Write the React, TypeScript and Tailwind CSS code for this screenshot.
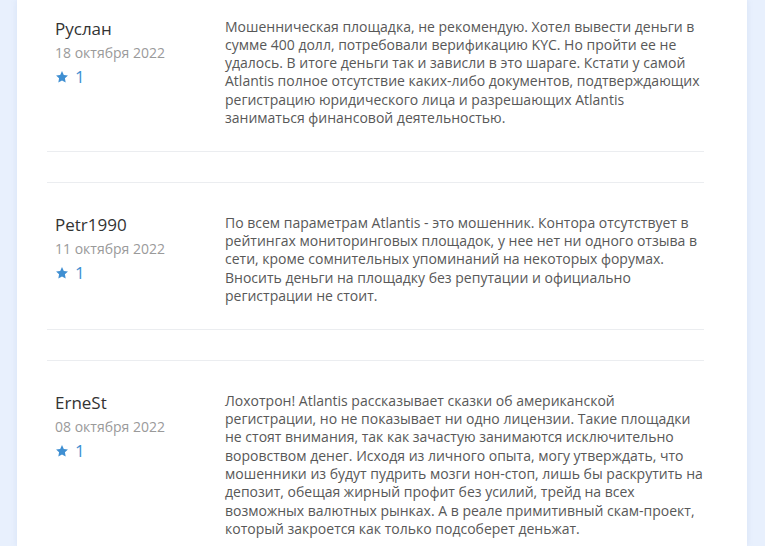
const reviews = [
  {
    name: "Руслан",
    date: "18 октября 2022",
    rating: 1,
    text: "Мошенническая площадка, не рекомендую. Хотел вывести деньги в сумме 400 долл, потребовали верификацию KYC. Но пройти ее не удалось. В итоге деньги так и зависли в это шараге. Кстати у самой Atlantis полное отсутствие каких-либо документов, подтверждающих регистрацию юридического лица и разрешающих Atlantis заниматься финансовой деятельностью.",
  },
  {
    name: "Petr1990",
    date: "11 октября 2022",
    rating: 1,
    text: "По всем параметрам Atlantis - это мошенник. Контора отсутствует в рейтингах мониторинговых площадок, у нее нет ни одного отзыва в сети, кроме сомнительных упоминаний на некоторых форумах. Вносить деньги на площадку без репутации и официально регистрации не стоит.",
  },
  {
    name: "ErneSt",
    date: "08 октября 2022",
    rating: 1,
    text: "Лохотрон! Atlantis рассказывает сказки об американской регистрации, но не показывает ни одно лицензии. Такие площадки не стоят внимания, так как зачастую занимаются исключительно воровством денег. Исходя из личного опыта, могу утверждать, что мошенники из будут пудрить мозги нон-стоп, лишь бы раскрутить на депозит, обещая жирный профит без усилий, трейд на всех возможных валютных рынках. А в реале примитивный скам-проект, который закроется как только подсоберет деньжат.",
  },
];

function Star() {
  return (
    <svg viewBox="0 0 24 24" className="h-[14px] w-[14px]" fill="#3f8fd2">
      <path d="M12 1.8l3.1 6.6 7.1.9-5.2 4.9 1.3 7.1L12 17.8l-6.3 3.5 1.3-7.1L1.8 9.3l7.1-.9z" />
    </svg>
  );
}

function Review({ r }: { r: (typeof reviews)[number] }) {
  return (
    <div className="mb-[30px] flex border-y border-[#ebedf0] pt-[28.5px] pb-[24px]">
      <div className="w-[178px] shrink-0 pl-[8px]">
        <div className="text-[17px] leading-[26px] text-[#333]">{r.name}</div>
        <div className="mt-[1px] text-[14px] leading-[19px] text-[#9a9a9a]">{r.date}</div>
        <div className="mt-[3px] flex items-center gap-[6px] text-[17px] leading-[24px] text-[#3f8fd2]">
          <Star />
          <span>{r.rating}</span>
        </div>
      </div>
      <p className="mt-[2px] w-[480px] shrink-0 text-[14px] leading-[18.3px] text-[#585858]">{r.text}</p>
    </div>
  );
}

export default function App() {
  return (
    <div
      className="h-[546px] overflow-hidden bg-[#e8f0fd] pl-[17px] pr-[18px]"
      style={{ fontFamily: '"Open Sans", "Noto Sans", sans-serif' }}
    >
      <div className="h-full overflow-hidden bg-white pl-[30px] pr-[43px] shadow-[0_0_6px_rgba(120,150,200,0.15)]">
        <div className="-mt-[14px]">
          {reviews.map((r) => (
            <Review key={r.name} r={r} />
          ))}
        </div>
      </div>
    </div>
  );
}
